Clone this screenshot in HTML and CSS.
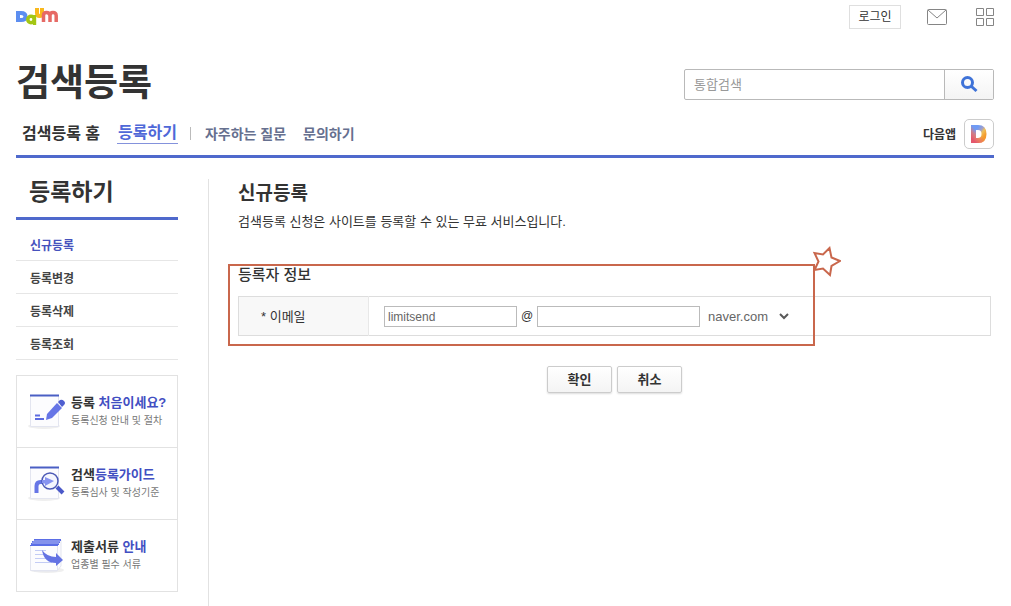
FILE: index.html
```html
<!DOCTYPE html>
<html lang="ko">
<head>
<meta charset="utf-8">
<meta name="viewport" content="width=device-width, initial-scale=1">
<title>검색등록</title>
<link rel="stylesheet" href="styles.css">
</head>
<body>
<div class="page">
  <header class="header">
    <div class="topbar">
      <a class="logo" href="#" aria-label="Daum"><svg width="43" height="18" viewBox="0 0 43 18" fill="none" stroke-width="4">
        <path stroke="#f9b81d" d="M21 0v5q0 3 2.500 3T26 5V0"/>
        <path stroke="#5c8ef0" d="M2 5h3q4.500 0 4.500 3.500T5 12H2z"/>
        <circle cx="15" cy="11.500" r="3.200" stroke="#a3c614" stroke-width="3.600"/>
        <path stroke="#a3c614" stroke-width="3.400" d="M18.500 7v10"/>
        <path stroke="#e66a65" stroke-width="3.500" d="M27.500 14V7.500q0-3 3-3t3.500 3V14M34 7.500q0-3 3-3t3.200 3V14"/>
      </svg></a>
      <div class="tools">
        <button class="login" type="button">로그인</button>
        <a class="tool" href="#" aria-label="메일"><svg width="20" height="17" viewBox="0 0 20 17" fill="none" stroke="#858585"><rect x=".5" y=".5" width="19" height="15" rx="1"/><path d="M1 1l9 8 9-8"/></svg></a>
        <a class="tool" href="#" aria-label="서비스 더보기"><svg width="18" height="18" viewBox="0 0 18 18" fill="none" stroke="#858585"><path d="M.5.5h7v7h-7zM10.500.5h7v7h-7zM.5 10.500h7v7h-7zM10.500 10.500h7v7h-7z"/></svg></a>
      </div>
    </div>
    <div class="titlebar">
      <h1 class="site-title">검색등록</h1>
      <form class="search">
        <input class="search-input" type="text" placeholder="통합검색" aria-label="통합검색">
        <button class="search-button" type="button" aria-label="검색"><svg width="18" height="18" viewBox="0 0 18 18" fill="none" stroke="#3f73d8"><circle cx="7.500" cy="7.500" r="5" stroke-width="3"/><path d="M11 11l5.500 5" stroke-width="3"/></svg></button>
      </form>
    </div>
    <div class="navbar">
      <nav class="nav">
        <a class="nav-main" href="#">검색등록 홈</a>
        <a class="nav-main nav-current" href="#">등록하기</a>
        <span class="nav-bar"></span>
        <a class="nav-sub" href="#">자주하는 질문</a>
        <a class="nav-sub" href="#">문의하기</a>
      </nav>
      <a class="app" href="#">다음앱 <span class="app-icon"><svg width="18" height="18" viewBox="0 0 18 18">
        <defs>
          <linearGradient id="app-side" x1="0" y1="0" x2="1" y2="1"><stop offset=".2" stop-color="#6f9bf5"/><stop offset=".45" stop-color="#a3a0c8"/><stop offset=".6" stop-color="#eec05a"/><stop offset=".85" stop-color="#f59a2c"/></linearGradient>
          <linearGradient id="app-foot" x1="0" y1="1" x2=".5" y2=".4"><stop offset="0" stop-color="#e4576c"/><stop offset=".5" stop-color="#e8756a" stop-opacity=".8"/><stop offset="1" stop-color="#e8756a" stop-opacity="0"/></linearGradient>
        </defs>
        <path fill="none" stroke="url(#app-side)" stroke-width="5" d="M3.500 2.500h4.500q6 0 6 6.500t-6 6.500H3.500z"/>
        <path fill="none" stroke="url(#app-foot)" stroke-width="5" d="M3.500 2.500h4.500q6 0 6 6.500t-6 6.500H3.500z"/>
      </svg></span></a>
    </div>
  </header>

  <div class="columns">
    <aside class="side">
      <h2 class="side-title">등록하기</h2>
      <ul class="menu">
        <li><a class="menu-current" href="#">신규등록</a></li>
        <li><a href="#">등록변경</a></li>
        <li><a href="#">등록삭제</a></li>
        <li><a href="#">등록조회</a></li>
      </ul>
      <ul class="guides">
        <li><a class="guide" href="#">
          <svg class="guide-icon" width="38" height="38" viewBox="0 0 38 38">
            <ellipse class="shadow" cx="16" cy="33" rx="16" ry="3"/>
            <path class="paper" d="M2.500 2.500h28v31h-28z"/>
            <path d="M2 2.500h29" stroke="#4a5fc4" stroke-width="2"/>
            <path d="M7 22.500h5M7 26h9" stroke="#5c6be0" stroke-width="2"/>
            <path fill="#6675e6" d="M19 21L29 10l5 5-10 10-6 2z"/>
            <path fill="#4f5fd0" d="M30 9l2-2q2-1 4 1t0 4l-2 2z"/>
          </svg>
          <span class="guide-text"><strong>등록 <em>처음이세요?</em></strong><small>등록신청 안내 및 절차</small></span></a></li>
        <li><a class="guide" href="#">
          <svg class="guide-icon" width="38" height="38" viewBox="0 0 38 38">
            <ellipse class="shadow" cx="16" cy="33" rx="16" ry="3"/>
            <path class="paper" d="M2.500 2.500h28v31h-28z"/>
            <path d="M2 2.500h29" stroke="#4a5fc4" stroke-width="2"/>
            <path d="M8.500 28v-7q0-4 4-4h5" fill="none" stroke="#6675e6" stroke-width="4"/>
            <path d="M29 22l6 6" stroke="#4b59c9" stroke-width="4"/>
            <circle cx="22" cy="16" r="8" fill="#f0f2fd" fill-opacity=".6" stroke="#4c59b5" stroke-width="1.500"/>
            <path fill="#8793f0" d="M17 12l9 4-9 5v-3h-3v-3h3z"/>
          </svg>
          <span class="guide-text"><strong>검색<em>등록가이드</em></strong><small>등록심사 및 작성기준</small></span></a></li>
        <li><a class="guide" href="#">
          <svg class="guide-icon" width="38" height="38" viewBox="0 0 38 38">
            <ellipse class="shadow" cx="19" cy="33" rx="17" ry="3"/>
            <path class="paper" d="M6 3h27v26l-4 5H6z"/>
            <path class="paper" d="M2.500 8.500h27v25h-27z"/>
            <path fill="#5b6ee6" d="M6 2h27v2H6zM4 4h28v2H4zM3 6h28v2H3zM2 8h28v1H2z"/>
            <path stroke="#fff" stroke-opacity=".5" d="M5 4h27M4 6h27"/>
            <path d="M7 13.500h11M7 17.500h11M7 21.500h15M7 25.500h17" stroke="#c3ccf5"/>
            <path fill="#6473e3" d="M14 13q5 7 14 7v-4l7 7-7 6v-3q-12 0-14-13z"/>
          </svg>
          <span class="guide-text"><strong>제출서류 <em>안내</em></strong><small>업종별 필수 서류</small></span></a></li>
      </ul>
    </aside>

    <main class="content">
      <h2 class="content-title">신규등록</h2>
      <p class="lead">검색등록 신청은 사이트를 등록할 수 있는 무료 서비스입니다.</p>
      <form>
        <section class="register">
          <h3 class="register-title">등록자 정보</h3>
          <table class="fields">
            <tr>
              <th scope="row"><label for="email-id">* 이메일</label></th>
              <td>
                <div class="email">
                  <input class="text-field email-id" id="email-id" type="text" value="limitsend">
                  <span class="at">@</span>
                  <input class="text-field email-domain" type="text" aria-label="이메일 도메인">
                  <span class="provider">
                    <select aria-label="도메인 선택"><option>naver.com</option></select>
                    <svg class="chevron" width="10" height="7" viewBox="0 0 10 7" fill="none" stroke="#595959" stroke-width="2"><path d="M1 1l4 4 4-4"/></svg>
                  </span>
                </div>
              </td>
            </tr>
          </table>
          <div class="highlight">
            <svg class="star" width="32" height="32" viewBox="0 0 32 32" fill="none" stroke="#c9674c" stroke-width="2"><path d="M20.500 2l2 9.500L31 15l-8.500 5-1.500 9-7-6.500L5.500 24l4-8.500-4-8.500 8.500 1.500z"/></svg>
          </div>
        </section>
        <div class="actions">
          <button class="action" type="submit">확인</button>
          <button class="action" type="button">취소</button>
        </div>
      </form>
    </main>
  </div>
</div>
</body>
</html>
```
FILE: styles.css
```css
* { box-sizing: border-box; }
body, h1, h2, h3, p, ul { margin: 0; padding: 0; }
ul { list-style: none; }
a { color: inherit; text-decoration: none; }
em, small { font-style: normal; }
body, button, input, select {
  font-family: "Liberation Sans", "Noto Sans CJK KR", sans-serif;
}
body { background: #fff; color: #333; font-size: 13px; }
.page {
  display: flex;
  flex-direction: column;
  min-height: 100vh;
  padding: 0 17px 0 16px;
}

.topbar {
  display: flex;
  justify-content: space-between;
  align-items: center;
  height: 34px;
}
.logo { display: flex; }
.tools { display: flex; align-items: center; }
.login {
  width: 52px;
  height: 24px;
  padding: 0;
  border: 1px solid #dfdfdf;
  background: #fff;
  color: #333;
  font-size: 12px;
  line-height: 20px;
}
.tool { display: flex; margin-left: 26px; }
.tool + .tool { margin-left: 29px; }

.titlebar {
  display: flex;
  justify-content: space-between;
  align-items: center;
  height: 68px;
  margin-top: 16px;
}
.site-title {
  font-size: 37px;
  line-height: 64px;
}
.search {
  display: flex;
  width: 310px;
  height: 31px;
  border: 1px solid #b9b9b9;
  border-radius: 2px;
}
.search-input {
  flex: 1;
  min-width: 0;
  padding: 0 9px;
  border: 0;
  background: none;
  font-size: 13px;
}
.search-input::placeholder { color: #999; }
.search-button {
  display: flex;
  align-items: center;
  justify-content: center;
  width: 49px;
  padding: 0;
  border: 0;
  border-left: 1px solid #b9b9b9;
  background: linear-gradient(#fff, #f4f4f4);
}

.navbar {
  display: flex;
  justify-content: space-between;
  align-items: center;
  height: 40px;
  border-bottom: 3px solid #4f69cc;
}
.nav {
  display: flex;
  align-items: center;
  padding: 0 0 6px 6px;
  font-weight: bold;
}
.nav-main { font-size: 16px; line-height: 20px; }
.nav-current {
  margin-left: 17px;
  padding: 0 1px;
  border-bottom: 1px solid #8492dc;
  color: #4f68d8;
}
.nav-bar {
  width: 1px;
  height: 13px;
  margin: 0 14px 0 12px;
  background: #bbb;
}
.nav-sub { color: #66708f; font-size: 14px; line-height: 20px; }
.nav-sub + .nav-sub { margin-left: 17px; }
.app {
  display: flex;
  align-items: center;
  gap: 8px;
  padding-bottom: 6px;
  font-size: 12px;
  font-weight: bold;
}
.app-icon {
  display: flex;
  align-items: center;
  justify-content: center;
  width: 30px;
  height: 30px;
  border: 1px solid #ccc;
  border-radius: 5px;
}

.columns { display: flex; flex: 1; }
.side { width: 162px; padding-top: 13px; }
.side-title {
  height: 49px;
  padding-left: 13px;
  border-bottom: 3px solid #4f69cc;
  font-size: 23px;
  line-height: 42px;
}
.menu { padding-top: 8px; }
.menu li { border-bottom: 1px solid #e6e6e6; }
.menu a {
  display: block;
  padding: 4px 14px 0;
  color: #444;
  font-size: 12px;
  font-weight: bold;
  line-height: 28px;
}
.menu .menu-current { color: #4652bd; }
.guides { margin-top: 15px; border: 1px solid #e2e2e2; }
.guides li + li { border-top: 1px solid #e2e2e2; }
.guide {
  display: flex;
  align-items: center;
  gap: 5px;
  height: 71px;
  padding-left: 11px;
  white-space: nowrap;
}
.guide-icon { flex: none; }
.guide-text strong { display: block; font-size: 13px; line-height: 18px; }
.guide-text em { color: #424fc2; }
.guide-text small { display: block; color: #777; font-size: 10px; line-height: 18px; }
.shadow { fill: #efefef; }
.paper { fill: #fcfcfe; stroke: #e3e5f0; }

.content {
  flex: 1;
  min-width: 0;
  margin: 21px 0 0 30px;
  padding: 0 3px 0 29px;
  border-left: 1px solid #e2e2e2;
}
.content-title { font-size: 19px; line-height: 29px; }
.lead { font-size: 13px; line-height: 27px; }
.register { position: relative; margin-top: 29px; }
.register-title { font-size: 15px; font-weight: 500; line-height: 22px; }
.fields {
  width: 100%;
  margin-top: 10px;
  border: 1px solid #ddd;
  border-collapse: collapse;
}
.fields th {
  width: 130px;
  padding: 0 0 2px 22px;
  border-right: 1px solid #e8e8e8;
  background: #f8f8f8;
  font-size: 13px;
  font-weight: normal;
  text-align: left;
}
.fields td { height: 39px; padding: 0 15px; }
.email { display: flex; align-items: center; }
.text-field {
  height: 21px;
  padding: 2px 3px 0;
  border: 1px solid #bbb;
  color: #666;
  font-size: 12px;
}
.email-id { width: 133px; }
.email-domain { width: 163px; }
.at { width: 20px; font-size: 12px; text-align: center; }
.provider { display: flex; align-items: center; position: relative; margin-left: 8px; }
.provider select {
  width: 84px;
  padding: 0;
  border: 0;
  background: none;
  color: #666;
  font-size: 13px;
  appearance: none;
}
.chevron { position: absolute; right: 3px; pointer-events: none; }
.highlight {
  position: absolute;
  top: 0;
  left: -10px;
  width: 587px;
  height: 82px;
  border: 2px solid #c9674c;
  pointer-events: none;
}
.star { position: absolute; top: -20px; right: -28px; }
.actions {
  display: flex;
  justify-content: center;
  gap: 5px;
  margin-top: 30px;
}
.action {
  width: 65px;
  height: 27px;
  padding: 0;
  border: 1px solid #ccc;
  border-radius: 2px;
  background: linear-gradient(#fff, #f4f4f4);
  box-shadow: 0 1px 2px #ddd;
  color: #333;
  font-size: 13px;
  font-weight: bold;
  line-height: 24px;
}
```
